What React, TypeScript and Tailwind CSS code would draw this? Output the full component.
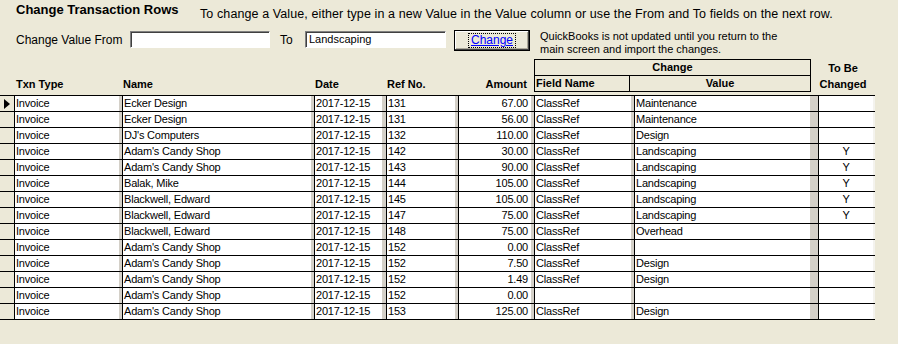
import React from "react";

type Row = [string, string, string, string, string, string, string, string];

const rows: Row[] = [
  ["Invoice", "Ecker Design", "2017-12-15", "131", "67.00", "ClassRef", "Maintenance", ""],
  ["Invoice", "Ecker Design", "2017-12-15", "131", "56.00", "ClassRef", "Maintenance", ""],
  ["Invoice", "DJ's Computers", "2017-12-15", "132", "110.00", "ClassRef", "Design", ""],
  ["Invoice", "Adam's Candy Shop", "2017-12-15", "142", "30.00", "ClassRef", "Landscaping", "Y"],
  ["Invoice", "Adam's Candy Shop", "2017-12-15", "143", "90.00", "ClassRef", "Landscaping", "Y"],
  ["Invoice", "Balak, Mike", "2017-12-15", "144", "105.00", "ClassRef", "Landscaping", "Y"],
  ["Invoice", "Blackwell, Edward", "2017-12-15", "145", "105.00", "ClassRef", "Landscaping", "Y"],
  ["Invoice", "Blackwell, Edward", "2017-12-15", "147", "75.00", "ClassRef", "Landscaping", "Y"],
  ["Invoice", "Blackwell, Edward", "2017-12-15", "148", "75.00", "ClassRef", "Overhead", ""],
  ["Invoice", "Adam's Candy Shop", "2017-12-15", "152", "0.00", "ClassRef", "", ""],
  ["Invoice", "Adam's Candy Shop", "2017-12-15", "152", "7.50", "ClassRef", "Design", ""],
  ["Invoice", "Adam's Candy Shop", "2017-12-15", "152", "1.49", "ClassRef", "Design", ""],
  ["Invoice", "Adam's Candy Shop", "2017-12-15", "152", "0.00", "", "", ""],
  ["Invoice", "Adam's Candy Shop", "2017-12-15", "153", "125.00", "ClassRef", "Design", ""],
];

// one entry per datasheet column: width, right bevel strip, alignment
const colClasses = [
  "w-[108px] border-r-[3px] border-r-[#d4d0c8] pl-[1px]",
  "w-[192px] border-r-[3px] border-r-[#d4d0c8] pl-[1px]",
  "w-[72px] border-r-[4px] border-r-[#d4d0c8] pl-[1px]",
  "w-[72px] border-r-[3px] border-r-[#d4d0c8] pl-[1px]",
  "w-[76px] border-r-[3px] border-r-[#d4d0c8] pr-[3px] text-right",
  "w-[100px] border-r-[3px] border-r-[#d4d0c8] pl-[1px]",
  "w-[184px] border-r-[8px] border-r-[#d4d0c8] pl-[1px]",
  "w-[57px] border-r-[2px] border-r-[#f4f3ee] text-center",
];

function TextBox({ value, width }: { value: string; width: string }) {
  return (
    <div
      className={`${width} h-[17px] bg-white border border-t-[#808080] border-l-[#808080] border-b-white border-r-white shadow-[inset_1px_1px_0_#404040] pl-[3px] text-[11px] leading-[15px] text-black`}
    >
      {value}
    </div>
  );
}

export default function App() {
  return (
    <div className="w-[898px] h-[344px] bg-[#ece9d8] overflow-hidden text-black font-['Liberation_Sans',Arial,sans-serif]">
      {/* Title */}
      <div className="h-[30px] flex items-start pl-[16px] pt-[1px]">
        <div className="w-[184px] text-[13px] font-bold leading-[18px]">Change Transaction Rows</div>
        <div className="text-[12.5px] tracking-[0.1px] leading-[18px] pt-[4px]">
          To change a Value, either type in a new Value in the Value column or use the From and To fields on the next row.
        </div>
      </div>

      {/* Change value controls */}
      <div className="h-[26px] flex items-start pl-[16px]">
        <div className="w-[114px] text-[12px] leading-[17px] pt-[2px]">Change Value From</div>
        <div className="pt-[1px]">
          <TextBox value="" width="w-[140px]" />
        </div>
        <div className="ml-[10px] w-[25px] text-[12px] leading-[17px] pt-[2px]">To</div>
        <div className="pt-[1px]">
          <TextBox value="Landscaping" width="w-[141px]" />
        </div>
        <div className="ml-[8px] w-[76px] h-[21px] border border-black shadow-[inset_-1px_-1px_0_#404040,inset_1px_1px_0_#ffffff,inset_-2px_-2px_0_#aca899] bg-[#ece9d8] flex items-center justify-center">
          <span className="text-[12px] leading-[13px] text-[#0000ff] underline px-[2px] outline outline-1 outline-dotted outline-[#000000] bg-[#ece9d8]">
            Change
          </span>
        </div>
        <div className="ml-[10px] text-[11px] leading-[13px]">
          <div>QuickBooks is not updated until you return to the</div>
          <div>main screen and import the changes.</div>
        </div>
      </div>

      {/* Column headers */}
      <div className="h-[39px] flex items-end pb-[3px] text-[11px] font-bold leading-[16px]">
        <div className="w-[14px]" />
        <div className="w-[108px] pl-[2px]">Txn Type</div>
        <div className="w-[192px] pl-[1px]">Name</div>
        <div className="w-[72px] pl-[1px]">Date</div>
        <div className="w-[72px] pl-[1px]">Ref No.</div>
        <div className="w-[76px] pr-[7px] text-right">Amount</div>
        <div className="w-[277px] h-[33px] border border-black flex flex-col">
          <div className="h-[16px] border-b border-black text-center leading-[15px]">Change</div>
          <div className="flex-1 flex">
            <div className="w-[95px] border-r border-black pl-[1px] leading-[15px]">Field Name</div>
            <div className="flex-1 text-center leading-[15px]">Value</div>
          </div>
        </div>
        <div className="w-[64px] text-center leading-[16px]">
          <div>To Be</div>
          <div>Changed</div>
        </div>
      </div>

      {/* Datasheet */}
      <div className="w-[875px] border-b border-black">
        {rows.map((row, i) => (
          <div key={i} className="h-[16px] flex border-t border-black text-[11px] leading-[15px]">
            <div className="w-[14px] flex items-center pl-[4px]">
              {i === 0 && (
                <svg width="6" height="10" viewBox="0 0 6 10">
                  <path d="M0 0 L6 5 L0 10 Z" fill="#000" />
                </svg>
              )}
            </div>
            {row.map((cell, j) => (
              <div
                key={j}
                className={`${colClasses[j]} h-full border-l border-l-black bg-white whitespace-nowrap overflow-hidden tracking-[-0.2px]`}
              >
                {cell}
              </div>
            ))}
          </div>
        ))}
      </div>
    </div>
  );
}
